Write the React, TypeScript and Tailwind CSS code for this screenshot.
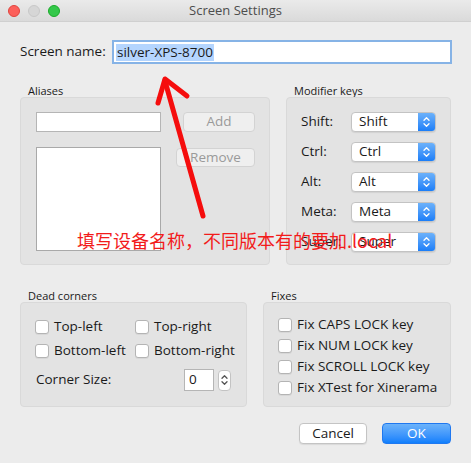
import React from "react";

const font = "font-['Open_Sans','Liberation_Sans',sans-serif]";

function Check({ label }: { label: string }) {
  return (
    <div className="flex h-[16px] items-center">
      <span className="h-[14px] w-[14px] shrink-0 rounded-[3px] border border-[#b4b4b4] bg-white shadow-[0_1px_0_rgba(0,0,0,0.05)]" />
      <span className="ml-[5px] whitespace-nowrap text-[13.5px] leading-none text-[#1a1a1a]">{label}</span>
    </div>
  );
}

function Chevrons({ color }: { color: string }) {
  return (
    <svg width="9" height="14" viewBox="0 0 9 14" fill="none" stroke={color} strokeWidth="1.3" strokeLinecap="round" strokeLinejoin="round">
      <path d="M2 5.2 L4.5 2.7 L7 5.2" />
      <path d="M2 8.8 L4.5 11.3 L7 8.8" />
    </svg>
  );
}

function Select({ value }: { value: string }) {
  return (
    <div className="flex h-[20px] w-[85px] overflow-hidden rounded-[4px] border border-[#c3c3c3] bg-white shadow-[0_1px_1px_rgba(0,0,0,0.08)]">
      <div className="flex flex-1 items-center pl-[7px] text-[13.5px] leading-none text-[#1a1a1a]">{value}</div>
      <div className="flex w-[17px] items-center justify-center bg-gradient-to-b from-[#6bb1fa] to-[#1a7ef8]">
        <Chevrons color="#ffffff" />
      </div>
    </div>
  );
}

function Group({ title, className, children }: { title: string; className: string; children: React.ReactNode }) {
  return (
    <div className="flex flex-col">
      <div className="h-[13px] pl-[8px] text-[11px] leading-[13px] text-[#1a1a1a]">{title}</div>
      <div className={`rounded-[4px] border border-[#d9d9d9] bg-[#e3e3e3] ${className}`}>{children}</div>
    </div>
  );
}

export default function App() {
  const modifiers = ["Shift", "Ctrl", "Alt", "Meta", "Super"];
  return (
    <div className={`relative h-[463px] w-[471px] overflow-hidden bg-[#ececec] ${font}`}>
      <div className="grid h-[22px] grid-cols-[1fr_auto_1fr] items-center border-b border-[#d0d0d0] bg-gradient-to-b from-[#eaeaea] to-[#dadada]">
        <div className="flex items-center gap-[8px] pl-[8px]">
          <span className="h-[12px] w-[12px] rounded-full border border-[#e0443e] bg-[#fc605b]" />
          <span className="h-[12px] w-[12px] rounded-full border border-[#c8c8c8] bg-[#d6d6d6]" />
          <span className="h-[12px] w-[12px] rounded-full border border-[#1aab29] bg-[#34c84a]" />
        </div>
        <div className="text-[13px] leading-none text-[#4d4d4d]">Screen Settings</div>
        <div />
      </div>

      <div className="px-[20px]">
        <div className="mt-[18px] flex h-[24px] items-center">
          <span className="w-[92px] text-[13.5px] leading-none text-[#1a1a1a]">Screen name:</span>
          <div className="mr-[-1px] flex h-[24px] flex-1 items-center border-2 border-[#86b3e6] bg-white pl-[2px]">
            <span className="bg-[#b4d5fe] px-[1px] text-[13.5px] leading-[17px] text-[#1a1a1a]">silver-XPS-8700</span>
          </div>
        </div>

        <div className="mt-[20px] flex gap-[16px]">
          <Group title="Aliases" className="h-[168px] w-[250px] pl-[15px] pt-[14px]">
            <div className="flex items-center">
              <div className="h-[20px] w-[125px] border border-[#b5b5b5] bg-white" />
              <div className="ml-[22px] flex h-[20px] w-[72px] items-center justify-center rounded-[4px] border border-[#d3d3d3] bg-[#efefef] text-[13.5px] leading-none text-[#9a9a9a]">
                Add
              </div>
            </div>
            <div className="mt-[15px] flex items-start">
              <div className="h-[104px] w-[125px] border border-[#a9a9a9] bg-white" />
              <div className="ml-[15px] mt-[1px] flex h-[19px] w-[79px] items-center justify-center rounded-[4px] border border-[#d3d3d3] bg-[#efefef] text-[13.5px] leading-none text-[#9a9a9a]">
                Remove
              </div>
            </div>
          </Group>
          <Group title="Modifier keys" className="flex h-[168px] w-[165px] flex-col gap-[10px] pl-[14px] pt-[14px]">
            {modifiers.map((m) => (
              <div key={m} className="flex items-center">
                <span className="w-[50px] text-[13.5px] leading-none text-[#1a1a1a]">{m}:</span>
                <Select value={m} />
              </div>
            ))}
          </Group>
        </div>

        <div className="mt-[24px] flex gap-[16px]">
          <Group title="Dead corners" className="h-[105px] w-[227px] pl-[14px] pt-[16px]">
            <div className="grid grid-cols-[100px_1fr] gap-y-[8px]">
              <Check label="Top-left" />
              <Check label="Top-right" />
              <Check label="Bottom-left" />
              <Check label="Bottom-right" />
            </div>
            <div className="mt-[10px] flex items-center">
              <span className="w-[149px] pl-[1px] text-[13.5px] leading-none text-[#1a1a1a]">Corner Size:</span>
              <div className="flex h-[22px] w-[30px] items-center border border-[#b5b5b5] bg-white pl-[4px] text-[13.5px] leading-none text-[#1a1a1a]">
                0
              </div>
              <div className="ml-[4px] flex h-[21px] w-[13px] items-center justify-center rounded-[4px] border border-[#c3c3c3] bg-white">
                <Chevrons color="#555555" />
              </div>
            </div>
          </Group>
          <Group title="Fixes" className="flex h-[105px] w-[188px] flex-col gap-[5px] pl-[14px] pt-[14px]">
            <Check label="Fix CAPS LOCK key" />
            <Check label="Fix NUM LOCK key" />
            <Check label="Fix SCROLL LOCK key" />
            <Check label="Fix XTest for Xinerama" />
          </Group>
        </div>

        <div className="mt-[16px] flex justify-end gap-[15px]">
          <div className="flex h-[21px] w-[68px] items-center justify-center rounded-[4px] border border-[#c4c4c4] bg-white text-[13.5px] leading-none text-[#1a1a1a] shadow-[0_1px_1px_rgba(0,0,0,0.08)]">
            Cancel
          </div>
          <div className="flex h-[21px] w-[69px] items-center justify-center rounded-[4px] border border-[#1f78f0] bg-gradient-to-b from-[#6cb3fa] to-[#0d7ffc] text-[13.5px] leading-none text-white">
            OK
          </div>
        </div>
      </div>

      <svg className="absolute inset-0" width="471" height="463" viewBox="0 0 471 463" fill="none">
        <line x1="203" y1="216" x2="165" y2="81" stroke="#f50d0d" strokeWidth="5" strokeLinecap="round" />
        <polyline points="158,103 165,79 187,96" stroke="#f50d0d" strokeWidth="5" strokeLinecap="round" strokeLinejoin="round" />
      </svg>
      <div className="absolute left-[77px] top-[229px] whitespace-nowrap font-['Noto_Sans_CJK_SC',sans-serif] text-[18px] leading-[22px] text-[#f21b1b]">
        填写设备名称，不同版本有的要加.local
      </div>
    </div>
  );
}
